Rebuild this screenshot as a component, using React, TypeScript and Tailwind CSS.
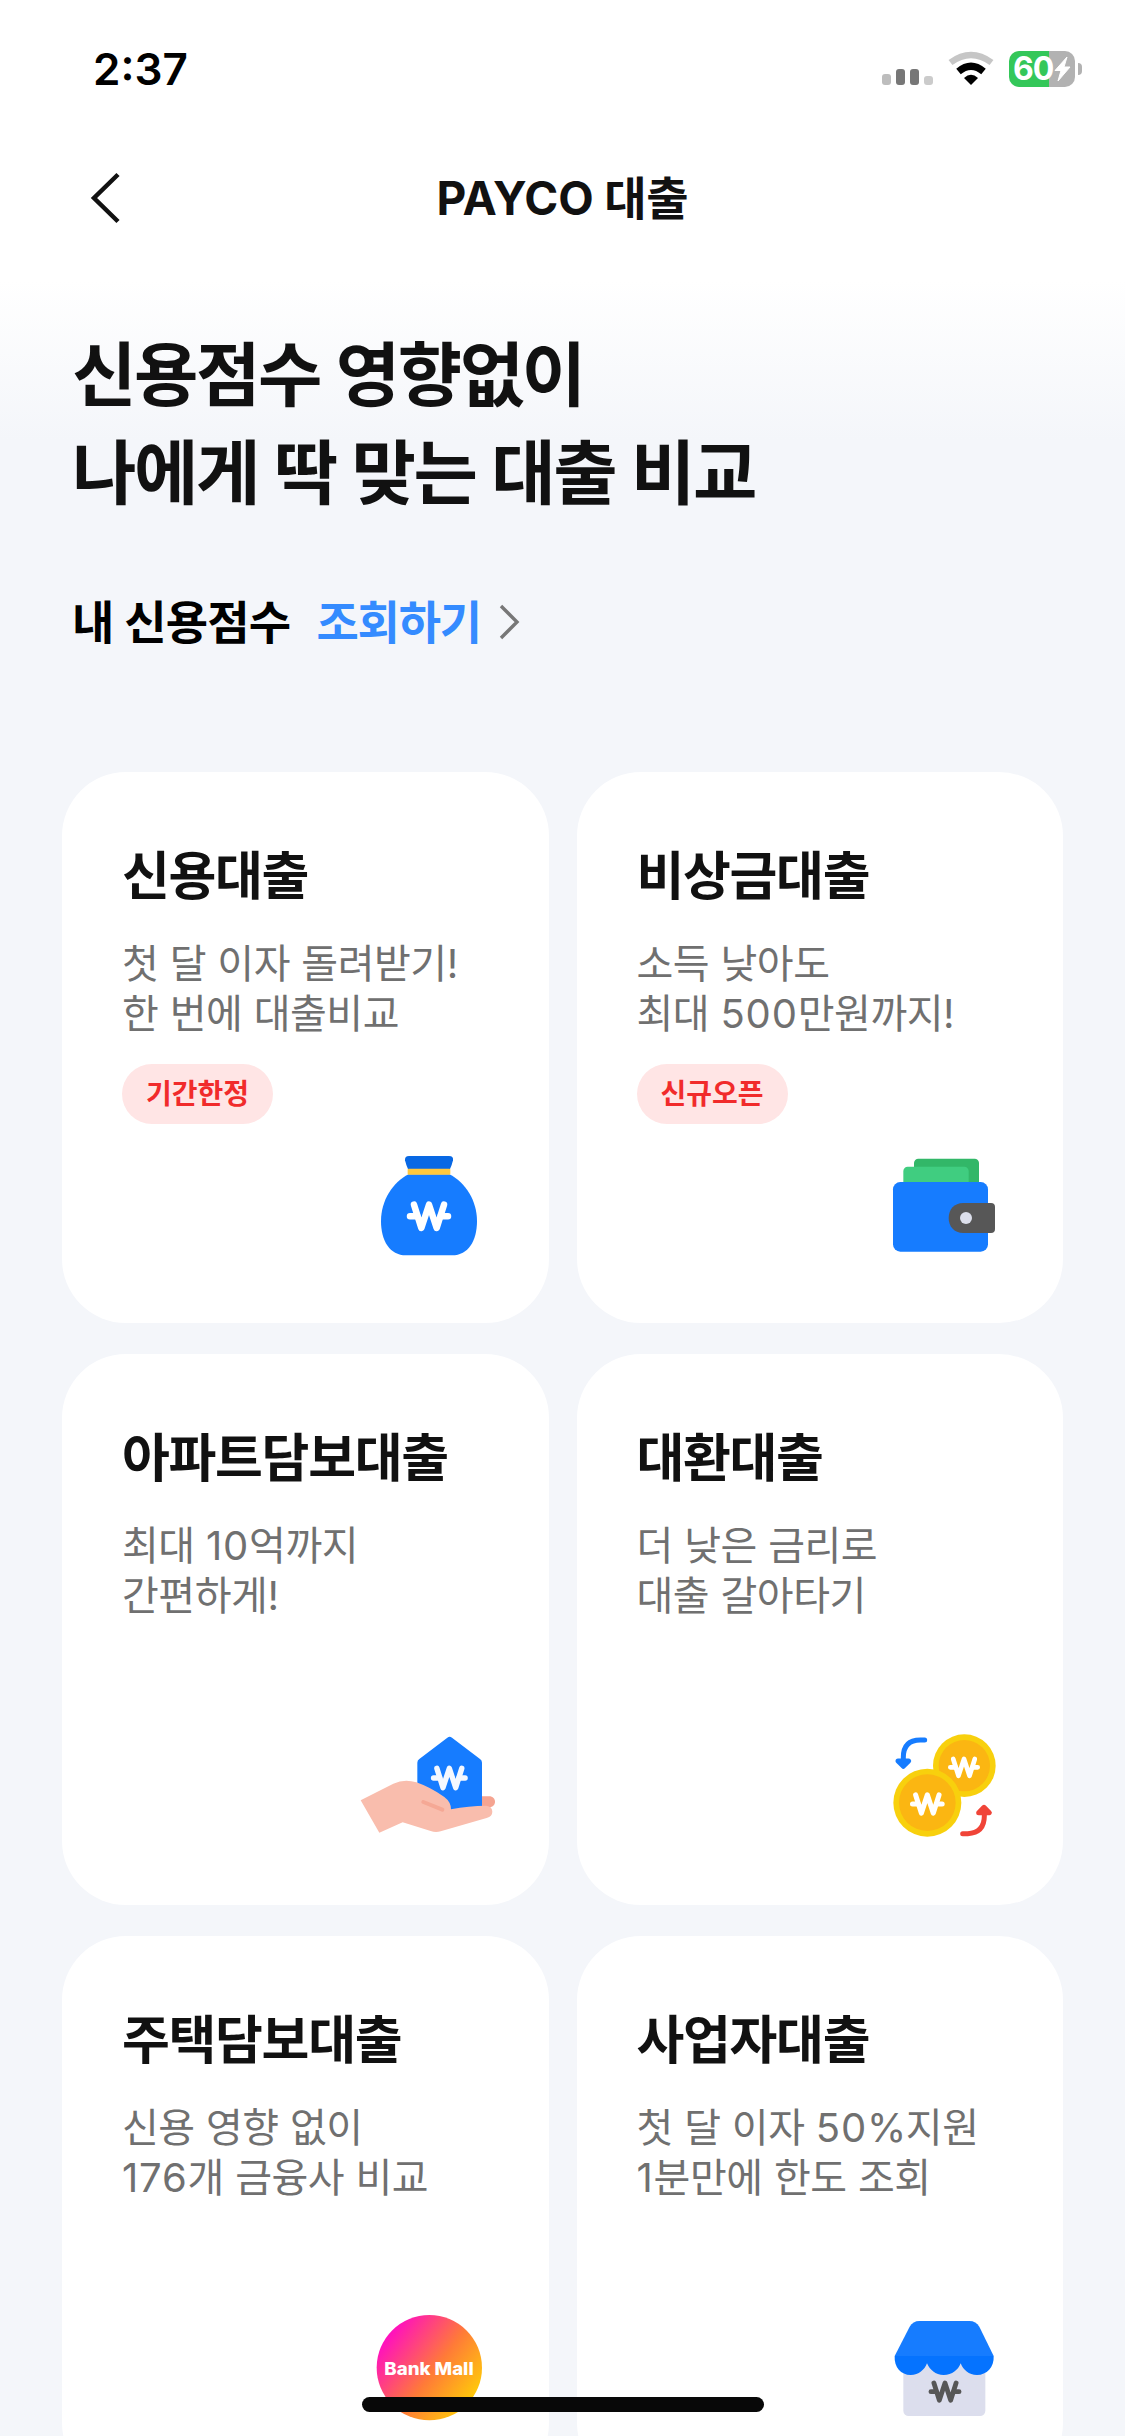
import type { ReactNode } from "react";

interface LoanProduct {
  title: string;
  lines: [string, string];
  badge?: string;
  icon: ReactNode;
}

const PRODUCTS: LoanProduct[] = [
  {
    title: "신용대출",
    lines: ["첫 달 이자 돌려받기!", "한 번에 대출비교"],
    badge: "기간한정",
    icon: <MoneyBagIcon />,
  },
  {
    title: "비상금대출",
    lines: ["소득 낮아도", "최대 500만원까지!"],
    badge: "신규오픈",
    icon: <WalletIcon />,
  },
  {
    title: "아파트담보대출",
    lines: ["최대 10억까지", "간편하게!"],
    icon: <HouseInHandIcon />,
  },
  {
    title: "대환대출",
    lines: ["더 낮은 금리로", "대출 갈아타기"],
    icon: <CoinsIcon />,
  },
  {
    title: "주택담보대출",
    lines: ["신용 영향 없이", "176개 금융사 비교"],
    icon: <BankMallIcon />,
  },
  {
    title: "사업자대출",
    lines: ["첫 달 이자 50%지원", "1분만에 한도 조회"],
    icon: <ShopIcon />,
  },
];

export default function App() {
  return (
    <div className="relative h-[2436px] w-[1125px] overflow-hidden bg-[#f4f6fa] bg-[linear-gradient(to_bottom,#fff_280px,#f4f6fa_440px)] font-['Inter','Noto_Sans_CJK_KR',sans-serif] text-[#111]">
      <StatusBar />
      <Header />

      <main>
        <section className="px-[72px] pt-[51px]">
          <h1 className="text-[70px] leading-[98px] font-bold tracking-[-2.4px] whitespace-nowrap [word-spacing:1.6px]">
            신용점수 영향없이
            <br />
            나에게 딱 맞는 대출 비교
          </h1>
          <div className="mt-[66px] flex h-[66px] items-center text-[46px] leading-[66px] font-semibold tracking-[-0.8px] whitespace-nowrap">
            <span className="text-black">내 신용점수</span>
            <a className="ml-[26px] flex items-center tracking-[-1.2px] text-[#348bff]">
              조회하기
              <svg
                className="ml-[18px] h-[36px] w-[22px]"
                viewBox="0 0 22 36"
                fill="none"
              >
                <path d="M2 2l16 16L2 34" stroke="#777" strokeWidth="3.4" />
              </svg>
            </a>
          </div>
        </section>

        <section className="mt-[117px] grid grid-cols-2 gap-x-7 gap-y-[31px] px-[62px]">
          {PRODUCTS.map((p) => (
            <LoanCard key={p.title} product={p} />
          ))}
        </section>
      </main>

      <div className="absolute top-[2397px] left-[362px] h-[15px] w-[402px] rounded-full bg-[#080808]" />
    </div>
  );
}

function StatusBar() {
  return (
    <div className="flex h-[138px] items-center justify-between pr-[43px] pl-[93px]">
      <span className="text-[44px] leading-none font-semibold text-black">
        2:37
      </span>
      <div className="flex items-center">
        <svg className="mr-[15px] h-[40px] w-[51px]" viewBox="0 0 51 40">
          <rect y="25" width="9" height="11" rx="3" fill="#bdbdbd" />
          <rect x="14" y="20" width="9" height="16" rx="3" fill="#777" />
          <rect x="28" y="20" width="9" height="16" rx="3" fill="#777" />
          <rect x="42" y="27" width="9" height="9" rx="3" fill="#cbcbcb" />
        </svg>
        <svg
          className="mr-[15px] h-[40px] w-[46px]"
          viewBox="0 0 46 40"
          fill="none"
        >
          <path d="M2.500 13.500Q23-1.500 43.500 13.500" stroke="#c6c6c6" strokeWidth="6.500" />
          <path d="M10.500 22.500Q23 12 35.500 22.500" stroke="#000" strokeWidth="7" />
          <path d="M16 29Q23 22.500 30 29L23 36Z" fill="#000" />
        </svg>
        <div className="flex h-[36px] w-[66px] items-center rounded-[10px] bg-[linear-gradient(to_right,#34c759_40px,#b2b2b2_40px)] pl-[4px]">
          <span className="w-[41px] text-[32px] leading-[36px] font-bold tracking-[-1px] text-white">
            60
          </span>
          <svg className="h-[26px] w-[17px] shrink-0" viewBox="0 0 17 26">
            <path
              d="M13 1L1 14.500H7L4 25L16 11H10Z"
              fill="#fff"
              stroke="#fff"
              strokeLinejoin="round"
            />
          </svg>
        </div>
        <div className="ml-[3px] h-[12px] w-[4px] rounded-r-full bg-[#b2b2b2]" />
      </div>
    </div>
  );
}

function Header() {
  return (
    <header className="grid h-[138px] grid-cols-[1fr_auto_1fr] items-center px-[88px] pb-[18px]">
      <svg className="h-[52px] w-[34px]" viewBox="0 0 34 52" fill="none">
        <path d="M30 2.500L6 26L30 49.500" stroke="#111" strokeWidth="4.500" />
      </svg>
      <h2 className="text-[46px] leading-[60px] font-bold tracking-[-0.2px]">
        PAYCO 대출
      </h2>
    </header>
  );
}

function LoanCard({ product }: { product: LoanProduct }) {
  const { title, lines, badge, icon } = product;
  return (
    <article className="flex h-[551px] flex-col items-start rounded-[64px] bg-white pt-[70px] pr-[28px] pb-[45px] pl-[60px] whitespace-nowrap">
      <h3 className="text-[52px] leading-[70px] font-bold tracking-[-1.3px]">
        {title}
      </h3>
      <p className="mt-[27px] text-[40px] leading-[50px] tracking-[-0.45px] text-[#707070] [word-spacing:0.5px]">
        <DescLine text={lines[0]} />
        <br />
        <DescLine text={lines[1]} />
      </p>
      {badge && (
        <span className="mt-[25px] flex h-[60px] items-center rounded-full bg-[#ffe5e5] px-[24px] text-[28px] font-semibold text-[#f12b2b]">
          {badge}
        </span>
      )}
      <div className="mt-auto h-0 self-end">
        <div className="-mt-[150px]">{icon}</div>
      </div>
    </article>
  );
}

// Digits are set a little wider than the Hangul around them
function DescLine({ text }: { text: string }) {
  return text.split(/(\d+)/).map((part, i) =>
    /^\d/.test(part) ? (
      <span key={i} className="tracking-[0.8px]">
        {part}
      </span>
    ) : (
      part
    ),
  );
}

interface CanvasProps {
  viewBox: string;
  children: ReactNode;
}

function Canvas({ viewBox, children }: CanvasProps) {
  return (
    <svg className="h-[150px] w-[180px]" viewBox={viewBox} fill="none">
      {children}
    </svg>
  );
}

interface WonProps {
  x: number;
  y: number;
  scale?: number;
  color?: string;
}

// Won sign centred on x, y
function Won({ x, y, scale = 1, color = "#fff" }: WonProps) {
  return (
    <g
      transform={`translate(${x} ${y}) scale(${scale})`}
      stroke={color}
      strokeWidth="19.5"
      strokeLinecap="round"
      strokeLinejoin="round"
    >
      <path d="M-45-35L-23 35L0-35L23 35L45-35" />
      <path d="M-57 0H-35M35 0H57" />
    </g>
  );
}

function MoneyBagIcon() {
  return (
    <Canvas viewBox="-57 -6 540 450">
      <path
        d="M147 78H267Q281 78 279 91Q276 104 270 117H144Q138 104 135 91Q134 78 147 78Z"
        fill="#0868e4"
      />
      <path
        d="M146 133H268C316 157 351 212 351 273C351 332 325 376 276 376H138C89 376 63 332 63 273C63 212 98 157 146 133Z"
        fill="#167cff"
      />
      <rect x="143" y="116" width="128" height="18" rx="3" fill="#ffc83d" />
      <Won x={207} y={259} />
    </Canvas>
  );
}

function WalletIcon() {
  return (
    <Canvas viewBox="-45 -6 540 450">
      <rect x="132" y="86" width="195" height="100" rx="13" fill="#32b768" />
      <rect x="100" y="110" width="196" height="90" rx="13" fill="#40cd80" />
      <rect x="69" y="156" width="285" height="209" rx="22" fill="#167cff" />
      <path
        d="M280 219H363Q375 219 375 231V297Q375 309 363 309H280C252 309 236 289 236 264S252 219 280 219Z"
        fill="#575757"
      />
      <circle cx="288" cy="264" r="18" fill="#dcdfeb" />
    </Canvas>
  );
}

function HouseInHandIcon() {
  return (
    <Canvas viewBox="3 0 540 450">
      <path
        d="M400 259H447C471 259 471 292 447 292H400Z"
        fill="#f5a491"
      />
      <path
        d="M322 83Q329 78 336 83L420 147Q426 151 426 158V310H232V158Q232 151 238 147Z"
        fill="#167cff"
      />
      <path
        d="M62 271L160 221Q193 206 229 217Q272 232 313 261Q333 276 333 298Q387 287 438 287Q457 289 457 305Q457 319 440 324L302 364Q287 369 272 363L188 337L118 368Z"
        fill="#f9bdad"
      />
      <path
        d="M250 276L307 299"
        stroke="#f5a895"
        strokeWidth="12"
        strokeLinecap="round"
      />
      <Won x={328} y={204} scale={0.83} color="#f4f8ff" />
    </Canvas>
  );
}

function CoinsIcon() {
  return (
    <Canvas viewBox="-45 0 540 450">
      <circle cx="283" cy="167" r="94" fill="#f8d00d" />
      <circle cx="283" cy="167" r="77" fill="#fbb612" />
      <circle cx="172" cy="278" r="102" fill="#f8d00d" />
      <circle cx="172" cy="278" r="85" fill="#fbb612" />
      <Won x={282} y={172} scale={0.72} />
      <Won x={172} y={282} scale={0.78} />
      <g strokeWidth="15" strokeLinecap="round" strokeLinejoin="round">
        <path d="M164 90H151Q100 90 100 142V160" stroke="#167cff" />
        <path d="M84 153L100 169L116 153Z" fill="#167cff" stroke="#167cff" />
        <path d="M278 371H293Q343 368 343 318V300" stroke="#f04438" />
        <path d="M326 308L342 292L358 308Z" fill="#f04438" stroke="#f04438" />
      </g>
    </Canvas>
  );
}

function BankMallIcon() {
  return (
    <Canvas viewBox="3 -12 540 450">
      <defs>
        <linearGradient id="bankMall" x1="0.1" y1="0.2" x2="0.9" y2="0.8">
          <stop offset="0" stopColor="#ff0fc0" />
          <stop offset="0.55" stopColor="#ff7a38" />
          <stop offset="1" stopColor="#ffc80a" />
        </linearGradient>
      </defs>
      <circle cx="268" cy="215" r="158" fill="url(#bankMall)" />
      <text
        x="267"
        y="236"
        textAnchor="middle"
        textLength="268"
        lengthAdjust="spacingAndGlyphs"
        className="fill-white text-[53px] font-extrabold"
      >
        Bank Mall
      </text>
    </Canvas>
  );
}

function ShopIcon() {
  return (
    <Canvas viewBox="-45 -12 540 450">
      <rect x="100" y="190" width="246" height="170" rx="16" fill="#dcdeed" />
      <path
        d="M148 75H298Q318 75 328 92L371 180H74L119 92Q129 75 148 75Z"
        fill="#167cff"
      />
      <path
        d="M74 180H371C373 214 350 237 321 237C296 237 280 222 272 202C264 222 247 237 221 237C196 237 180 222 171 202C163 222 147 237 122 237C93 237 72 214 74 180Z"
        fill="#0573ff"
      />
      <Won x={225} y={287} scale={0.74} color="#575757" />
    </Canvas>
  );
}
